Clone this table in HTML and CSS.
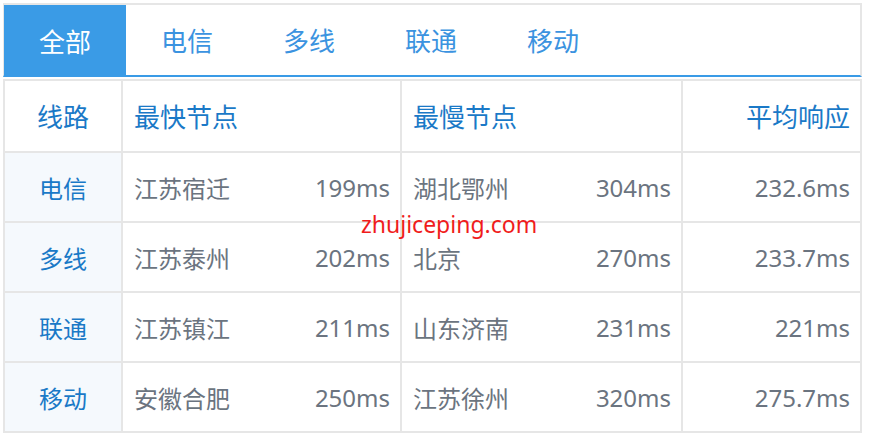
FILE: index.html
```html
<!DOCTYPE html>
<html lang="zh-CN">
<head>
    <meta charset="UTF-8">
    <meta name="viewport" content="width=device-width, initial-scale=1.0">
    <title>线路测速</title>
    <link rel="stylesheet" href="styles.css">
</head>
<body>
    <div class="box">
        <nav class="tabs">
            <a class="tab active">全部</a>
            <a class="tab">电信</a>
            <a class="tab">多线</a>
            <a class="tab">联通</a>
            <a class="tab">移动</a>
        </nav>

        <div class="grid">
            <div class="cell head line">线路</div>
            <div class="cell head">最快节点</div>
            <div class="cell head">最慢节点</div>
            <div class="cell head avg">平均响应</div>

            <div class="cell line">电信</div>
            <div class="cell node"><span>江苏宿迁</span><span>199ms</span></div>
            <div class="cell node"><span>湖北鄂州</span><span>304ms</span></div>
            <div class="cell avg">232.6ms</div>

            <div class="cell line">多线</div>
            <div class="cell node"><span>江苏泰州</span><span>202ms</span></div>
            <div class="cell node"><span>北京</span><span>270ms</span></div>
            <div class="cell avg">233.7ms</div>

            <div class="cell line">联通</div>
            <div class="cell node"><span>江苏镇江</span><span>211ms</span></div>
            <div class="cell node"><span>山东济南</span><span>231ms</span></div>
            <div class="cell avg">221ms</div>

            <div class="cell line">移动</div>
            <div class="cell node"><span>安徽合肥</span><span>250ms</span></div>
            <div class="cell node"><span>江苏徐州</span><span>320ms</span></div>
            <div class="cell avg">275.7ms</div>

            <div class="watermark">zhujiceping.com</div>
        </div>
    </div>
</body>
</html>
```

FILE: styles.css
```css
body {
    margin: 0;
    padding: 3px;
    background: #ffffff;
    font-family: "Noto Sans", "Noto Sans CJK SC", sans-serif;
    font-size: 24px;
}

.box {
    width: 859px;
}

.tabs {
    display: flex;
    height: 70px;
    border-top: 2px solid #e6e6e6;
    border-left: 1px solid #e6e6e6;
    border-right: 2px solid #e6e6e6;
    border-bottom: 2px solid #3a9be6;
}

.tab {
    width: 122px;
    display: flex;
    align-items: center;
    justify-content: center;
    font-size: 26px;
    color: #3b93e0;
    text-decoration: none;
    cursor: pointer;
}

.tab.active {
    background: #3a9be6;
    color: #ffffff;
    margin-bottom: -2px;
}

.grid {
    position: relative;
    margin-top: 2px;
    display: grid;
    grid-template-columns: 118px 279px 281px 179px;
    grid-template-rows: 72px repeat(4, 70px);
    border-top: 2px solid #e6e6e6;
    border-left: 2px solid #e6e6e6;
}

.cell {
    box-sizing: border-box;
    border-right: 2px solid #e6e6e6;
    border-bottom: 2px solid #e6e6e6;
    display: flex;
    align-items: center;
    padding: 0 10px 0 11px;
    color: #6b7480;
}

.head {
    font-size: 26px;
    color: #1a79c7;
}

.line {
    justify-content: center;
    background: #f5f9fd;
    color: #1a79c7;
    padding: 0;
}

.head.line {
    background: #ffffff;
}

.node {
    justify-content: space-between;
}

.avg {
    justify-content: flex-end;
}

.watermark {
    position: absolute;
    left: 356px;
    top: 132px;
    color: #f01c1c;
    font-size: 23px;
    line-height: 1;
}
```
